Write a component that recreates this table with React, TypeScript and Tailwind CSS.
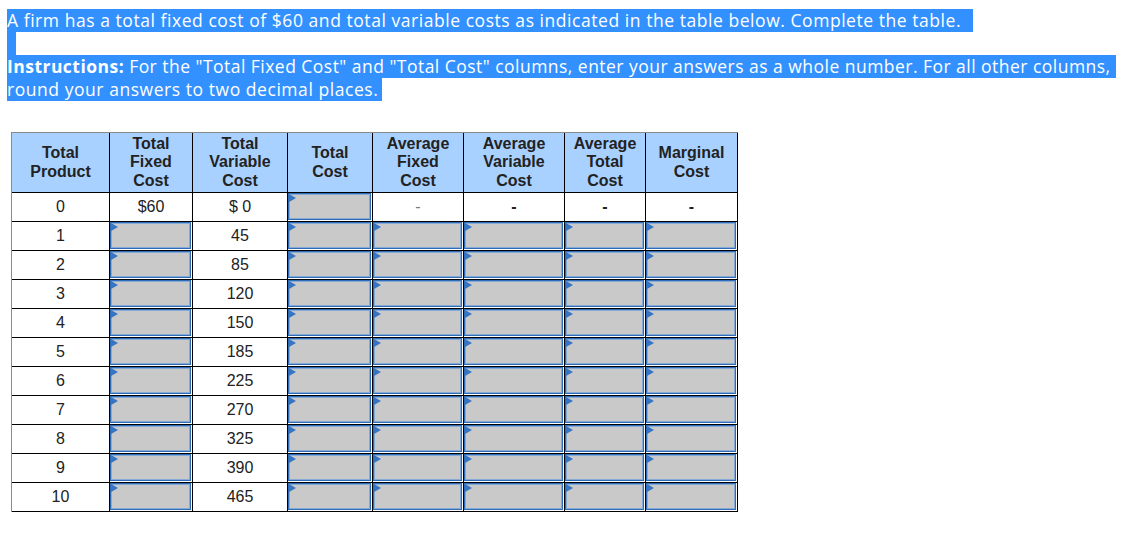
import type { ReactNode } from 'react'

const columns = [
  { label: ['Total', 'Product'] },
  { label: ['Total', 'Fixed', 'Cost'] },
  { label: ['Total', 'Variable', 'Cost'] },
  { label: ['Total', 'Cost'] },
  { label: ['Average', 'Fixed', 'Cost'] },
  { label: ['Average', 'Variable', 'Cost'] },
  { label: ['Average', 'Total', 'Cost'] },
  { label: ['Marginal', 'Cost'] },
]

const variableCosts = [45, 85, 120, 150, 185, 225, 270, 325, 390, 465]

function Line({ children, className = '' }: { children: ReactNode; className?: string }) {
  return (
    <div className="h-[23px] leading-[23px] whitespace-nowrap">
      <span className={`inline-block h-[23px] bg-[#3390ff] text-white ${className}`}>{children}</span>
    </div>
  )
}

function Cell({ children, className = '' }: { children?: ReactNode; className?: string }) {
  return (
    <div
      className={`flex h-[29px] items-center justify-center border-r border-b border-black bg-white text-[16px] text-[#222] ${className}`}
    >
      {children}
    </div>
  )
}

function InputCell() {
  return (
    <div className="h-[29px] border-r border-b border-black bg-white p-px pl-0 pt-0">
      <div className="relative h-full w-full border border-[#2f6cb8] bg-[#c9c9c9] shadow-[inset_0_0_0_1px_#86a9d6]">
        <span className="absolute top-0 left-0 h-0 w-0 border-y-[4px] border-l-[7px] border-y-transparent border-l-[#3674c4]" />
      </div>
    </div>
  )
}

export default function App() {
  return (
    <div className="h-[540px] w-[1127px] bg-white">
      <div className="px-[7px] pt-[9px] font-['Open_Sans',sans-serif] text-[17.5px] tracking-[0.55px] [font-variant-ligatures:none]">
        <Line className="pr-[12px]">
          A firm has a total fixed cost of $60 and total variable costs as indicated in the table below. Complete the table.
        </Line>
        <div className="h-[23px]">
          <span className="inline-block h-[23px] w-[9px] bg-[#3390ff]" />
        </div>
        <Line className="pr-[5px] tracking-[0.47px]">
          <b className="font-bold">Instructions:</b> For the "Total Fixed Cost" and "Total Cost" columns, enter your
          answers as a whole number. For all other columns,
        </Line>
        <Line className="pr-[4px]">round your answers to two decimal places.</Line>
      </div>

      <div className="mt-[31px] ml-[11px] inline-grid grid-cols-[98px_83px_95px_85px_91px_101px_81px_92px] border-t border-l border-[#8a8a8a] font-['Liberation_Sans',Arial,sans-serif]">
        {columns.map((col) => (
          <div
            key={col.label.join(' ')}
            className="flex h-[60px] flex-col items-center justify-center border-r border-b border-black bg-[#a9d1ff] text-center text-[16px] leading-[18.5px] font-bold text-[#222]"
          >
            {col.label.map((word) => (
              <span key={word}>{word}</span>
            ))}
          </div>
        ))}

        <Cell>0</Cell>
        <Cell>$60</Cell>
        <Cell>$ 0</Cell>
        <InputCell />
        <Cell className="text-[#777]">-</Cell>
        <Cell className="font-bold">-</Cell>
        <Cell className="font-bold">-</Cell>
        <Cell className="font-bold">-</Cell>

        {variableCosts.map((cost, i) => (
          <div key={cost} className="contents">
            <Cell>{i + 1}</Cell>
            <InputCell />
            <Cell>{cost}</Cell>
            <InputCell />
            <InputCell />
            <InputCell />
            <InputCell />
            <InputCell />
          </div>
        ))}
      </div>
    </div>
  )
}
